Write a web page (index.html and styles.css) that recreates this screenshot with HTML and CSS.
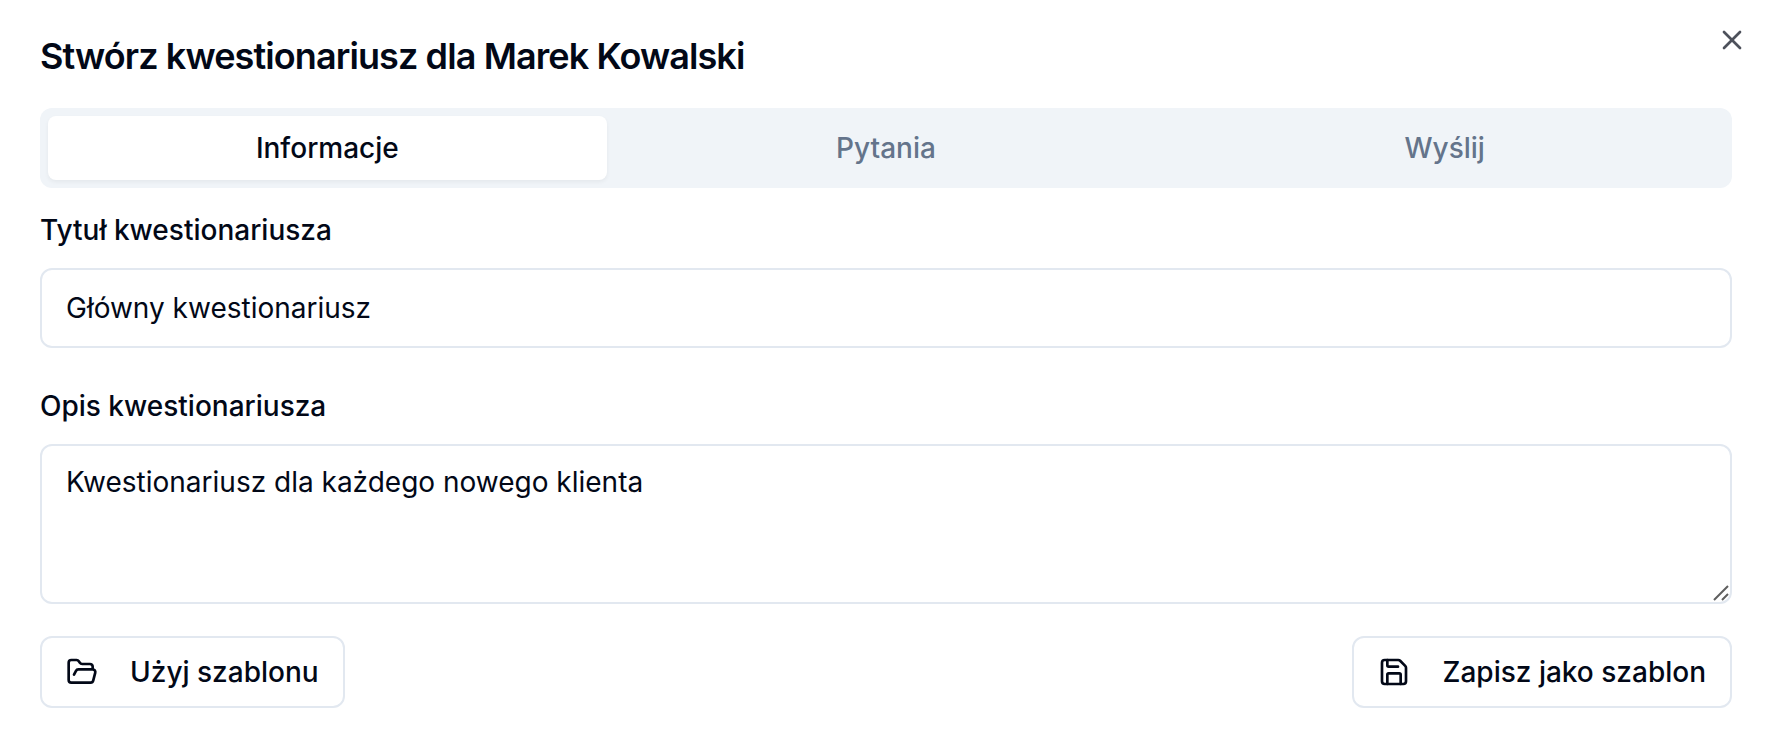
FILE: index.html
```html
<!DOCTYPE html>
<html lang="pl">
<head>
<meta charset="utf-8">
<title>Stwórz kwestionariusz</title>
<link rel="stylesheet" href="styles.css">
</head>
<body>
<main class="dialog">
  <h1 class="title">Stwórz kwestionariusz dla Marek Kowalski</h1>
  <button class="close" type="button" aria-label="Zamknij">
    <svg class="icon" viewBox="0 0 24 24" aria-hidden="true"><path d="M18 6 6 18"/><path d="m6 6 12 12"/></svg>
  </button>
  <div class="tabs" role="tablist">
    <button class="tab tab-active" type="button" role="tab" aria-selected="true">Informacje</button>
    <button class="tab" type="button" role="tab" aria-selected="false">Pytania</button>
    <button class="tab" type="button" role="tab" aria-selected="false">Wyślij</button>
  </div>
  <form class="form">
    <div class="field">
      <label class="label" for="title">Tytuł kwestionariusza</label>
      <input class="control" id="title" type="text" value="Główny kwestionariusz">
    </div>
    <div class="field">
      <label class="label" for="description">Opis kwestionariusza</label>
      <div class="area">
        <textarea class="control control-area" id="description">Kwestionariusz dla każdego nowego klienta</textarea>
        <svg class="grip" viewBox="0 0 16 16" aria-hidden="true"><path d="M1 15 15 1M9 15l6-6"/></svg>
      </div>
    </div>
    <div class="actions">
      <button class="button" type="button">
        <svg class="icon" viewBox="0 0 24 24" aria-hidden="true"><path d="m6 14 1.5-2.9A2 2 0 0 1 9.24 10H20a2 2 0 0 1 1.94 2.5l-1.54 6a2 2 0 0 1-1.95 1.5H4a2 2 0 0 1-2-2V5a2 2 0 0 1 2-2h3.9a2 2 0 0 1 1.69.9l.81 1.2a2 2 0 0 0 1.67.9H18a2 2 0 0 1 2 2v2"/></svg>
        Użyj szablonu
      </button>
      <button class="button" type="button">
        <svg class="icon" viewBox="0 0 24 24" aria-hidden="true"><path d="M15.2 3a2 2 0 0 1 1.4.6l3.8 3.8a2 2 0 0 1 .6 1.4V19a2 2 0 0 1-2 2H5a2 2 0 0 1-2-2V5a2 2 0 0 1 2-2z"/><path d="M17 21v-7a1 1 0 0 0-1-1H8a1 1 0 0 0-1 1v7"/><path d="M7 3v4a1 1 0 0 0 1 1h7"/></svg>
        Zapisz jako szablon
      </button>
    </div>
  </form>
</main>
</body>
</html>
```
FILE: styles.css
```css
*,
*::before,
*::after {
  box-sizing: border-box;
}

body {
  margin: 0;
  background: #ffffff;
  color: #020817;
  font-family: Inter, "Liberation Sans", sans-serif;
  font-size: 28px;
  line-height: 40px;
}

button,
input,
textarea {
  margin: 0;
  font: inherit;
  color: inherit;
}

.dialog {
  position: relative;
  display: flex;
  flex-direction: column;
  padding: 38px 46px 40px 40px;
}

.title {
  margin: 0 0 34px;
  font-size: 36px;
  font-weight: 600;
  line-height: 36px;
  letter-spacing: -0.025em;
}

.close {
  position: absolute;
  top: 24px;
  right: 30px;
  display: flex;
  padding: 0;
  border: 0;
  background: none;
  opacity: 0.7;
}

.icon {
  width: 32px;
  height: 32px;
  fill: none;
  stroke: currentColor;
  stroke-width: 2;
  stroke-linecap: round;
  stroke-linejoin: round;
}

.tabs {
  display: grid;
  grid-template-columns: repeat(3, 1fr);
  padding: 8px;
  border-radius: 12px;
  background: #f0f4f8;
  color: #64748b;
}

.tab {
  padding: 12px 24px;
  border: 0;
  border-radius: 8px;
  background: none;
  font-weight: 500;
}

.tab-active {
  background: #ffffff;
  color: #020817;
  box-shadow: 0 2px 4px rgba(0, 0, 0, 0.05);
}

.form {
  display: flex;
  flex-direction: column;
  gap: 32px;
  padding-top: 22px;
}

.field {
  display: flex;
  flex-direction: column;
  gap: 18px;
}

.field + .field {
  padding-top: 6px;
}

.label {
  font-weight: 500;
}

.control {
  display: block;
  width: 100%;
  padding: 18px 24px;
  border: 2px solid #e2e8f0;
  border-radius: 12px;
  background: #ffffff;
}

.area {
  position: relative;
}

.control-area {
  height: 160px;
  padding: 16px 24px;
  resize: vertical;
}

.control-area::-webkit-resizer {
  background: transparent;
}

.grip {
  position: absolute;
  right: 3px;
  bottom: 3px;
  width: 16px;
  height: 16px;
  fill: none;
  stroke: #5f5f5f;
  stroke-width: 2;
  pointer-events: none;
}

.actions {
  display: flex;
  justify-content: space-between;
}

.button {
  display: flex;
  align-items: center;
  gap: 32px;
  padding: 14px 24px;
  border: 2px solid #e2e8f0;
  border-radius: 12px;
  background: #ffffff;
  font-weight: 500;
}
```
